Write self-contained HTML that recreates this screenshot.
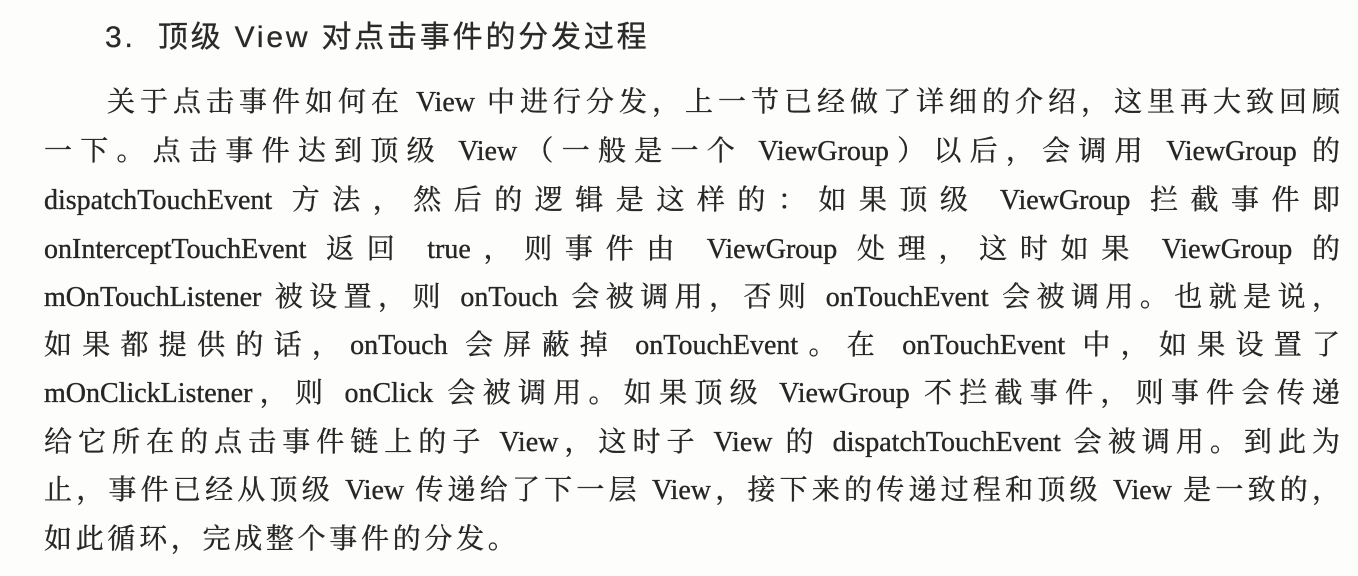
<!DOCTYPE html>
<html><head><meta charset="utf-8"><style>
html,body{margin:0;padding:0;background:#fdfdfc;}
body{width:1358px;height:576px;position:relative;overflow:hidden;color:#222;}
.h{position:absolute;left:105px;top:18px;font-family:"Liberation Sans","Noto Sans CJK SC",sans-serif;font-size:30px;line-height:40px;letter-spacing:2.8px;color:#2a2a2a;white-space:nowrap;-webkit-text-stroke:0.3px #2a2a2a;}
.l{position:absolute;left:44px;width:1296px;font-family:"Liberation Serif","Noto Serif CJK SC",serif;font-size:28px;line-height:40px;text-align:justify;text-align-last:justify;white-space:nowrap;color:#262626;-webkit-text-stroke:0.35px #262626;}
.last{text-align-last:left;letter-spacing:3.7px;}
</style></head><body>
<div class="h">3.&nbsp; 顶级 View 对点击事件的分发过程</div>
<div class="l" style="top:83px;left:107px;width:1233px">关于点击事件如何在 View 中进行分发，上一节已经做了详细的介绍，这里再大致回顾</div>
<div class="l" style="top:132px">一下。点击事件达到顶级 View（一般是一个 ViewGroup）以后，会调用 ViewGroup 的</div>
<div class="l" style="top:181px">dispatchTouchEvent 方法，然后的逻辑是这样的：如果顶级 ViewGroup 拦截事件即</div>
<div class="l" style="top:230px">onInterceptTouchEvent 返回 true，则事件由 ViewGroup 处理，这时如果 ViewGroup 的</div>
<div class="l" style="top:278px">mOnTouchListener 被设置，则 onTouch 会被调用，否则 onTouchEvent 会被调用。也就是说，</div>
<div class="l" style="top:326px">如果都提供的话，onTouch 会屏蔽掉 onTouchEvent。在 onTouchEvent 中，如果设置了</div>
<div class="l" style="top:374px">mOnClickListener，则 onClick 会被调用。如果顶级 ViewGroup 不拦截事件，则事件会传递</div>
<div class="l" style="top:423px">给它所在的点击事件链上的子 View，这时子 View 的 dispatchTouchEvent 会被调用。到此为</div>
<div class="l" style="top:471px">止，事件已经从顶级 View 传递给了下一层 View，接下来的传递过程和顶级 View 是一致的，</div>
<div class="l last" style="top:520px">如此循环，完成整个事件的分发。</div>
</body></html>
